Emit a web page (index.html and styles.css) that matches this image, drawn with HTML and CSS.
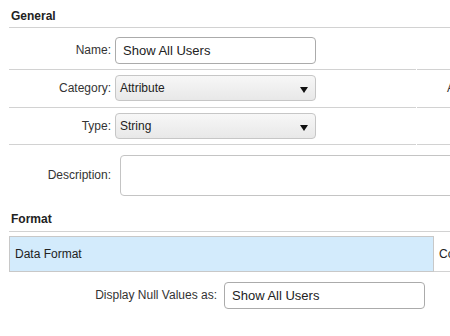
FILE: index.html
```html
<!DOCTYPE html>
<html>
<head>
<meta charset="utf-8">
<link rel="stylesheet" href="styles.css">
</head>
<body>
<div class="panel">
  <div class="section-title">General</div>

  <div class="row row-name">
    <div class="main">
      <span class="lbl">Name:</span>
      <div class="input">Show All Users</div>
    </div>
    <div class="side"></div>
  </div>

  <div class="row row-cat">
    <div class="main">
      <span class="lbl">Category:</span>
      <div class="select"><span>Attribute</span><i class="arrow"></i></div>
    </div>
    <div class="side"><span class="side-text">Alias</span></div>
  </div>

  <div class="row row-type">
    <div class="main">
      <span class="lbl">Type:</span>
      <div class="select"><span>String</span><i class="arrow"></i></div>
    </div>
    <div class="side"></div>
  </div>

  <div class="desc-row">
    <span class="lbl">Description:</span>
    <div class="textarea"></div>
  </div>

  <div class="section-title format-title">Format</div>

  <div class="table-row">
    <div class="cell-selected">Data Format</div>
    <div class="cell-side">Conditional</div>
  </div>

  <div class="null-row">
    <span class="lbl lbl-wide">Display Null Values as:</span>
    <div class="input input-null">Show All Users</div>
  </div>
</div>
</body>
</html>
```

FILE: styles.css
```css
html, body {
  margin: 0;
  padding: 0;
  background: #ffffff;
}
body {
  width: 450px;
  height: 336px;
  overflow: hidden;
  font-family: "Liberation Sans", Arial, sans-serif;
  font-size: 12px;
  color: #333333;
}
.panel {
  padding-left: 9px;
}
.section-title {
  font-weight: bold;
  line-height: 15px;
  padding: 9px 0 3px 2px;
  border-bottom: 1px solid #d2d2d2;
  color: #222222;
}
.format-title {
  padding-top: 16px;
  padding-bottom: 4px;
}
.row {
  display: flex;
}
.main {
  width: 407px;
  flex: none;
  display: flex;
  align-items: center;
  border-bottom: 1px solid #d2d2d2;
}
.side {
  flex: 1;
  min-width: 0;
  margin-left: 1px;
  border-bottom: 1px solid #d2d2d2;
  display: flex;
  align-items: center;
  overflow: hidden;
  white-space: nowrap;
  padding-left: 30px;
}
.side-text {
  line-height: 15px;
  color: #333333;
}
.row-name .main {
  padding: 9px 0 5px;
}
.row-cat .main {
  padding: 5px 0 6px;
}
.row-type .main {
  padding: 5px 0 5px;
}
.lbl {
  width: 102px;
  flex: none;
  text-align: right;
  line-height: 15px;
  color: #333333;
}
.input {
  box-sizing: border-box;
  margin-left: 4px;
  width: 201px;
  height: 27px;
  border: 1px solid #ababab;
  border-radius: 4px;
  padding-left: 7px;
  font-size: 13px;
  line-height: 25px;
  color: #222222;
  background: #ffffff;
}
.select {
  box-sizing: border-box;
  margin-left: 4px;
  width: 201px;
  height: 26px;
  border: 1px solid #c6c6c6;
  border-radius: 4px;
  padding: 0 7px 0 4px;
  display: flex;
  align-items: center;
  justify-content: space-between;
  background: linear-gradient(#f7f7f7, #e8e8e8);
  color: #222222;
  line-height: 15px;
}
.arrow {
  width: 0;
  height: 0;
  margin-top: 3px;
  border-left: 4px solid transparent;
  border-right: 4px solid transparent;
  border-top: 6px solid #111111;
}
.desc-row {
  display: flex;
  align-items: center;
  padding-top: 10px;
}
.textarea {
  box-sizing: border-box;
  margin-left: 9px;
  width: 400px;
  flex: none;
  height: 41px;
  border: 1px solid #c4c4c4;
  border-radius: 4px;
  background: #ffffff;
}
.table-row {
  display: flex;
  margin-top: 4px;
  height: 36px;
}
.cell-selected {
  box-sizing: border-box;
  width: 425px;
  flex: none;
  height: 36px;
  border: 1px solid #c8c8c8;
  background: #d3ebfc;
  padding-left: 5px;
  display: flex;
  align-items: center;
  color: #222222;
}
.cell-side {
  box-sizing: border-box;
  flex: 1;
  min-width: 0;
  height: 36px;
  border-bottom: 1px solid #d2d2d2;
  padding-left: 5px;
  display: flex;
  align-items: center;
  overflow: hidden;
  white-space: nowrap;
  color: #222222;
}
.null-row {
  display: flex;
  align-items: center;
  margin-top: 10px;
}
.lbl-wide {
  width: 208px;
}
.input-null {
  margin-left: 7px;
}
```
